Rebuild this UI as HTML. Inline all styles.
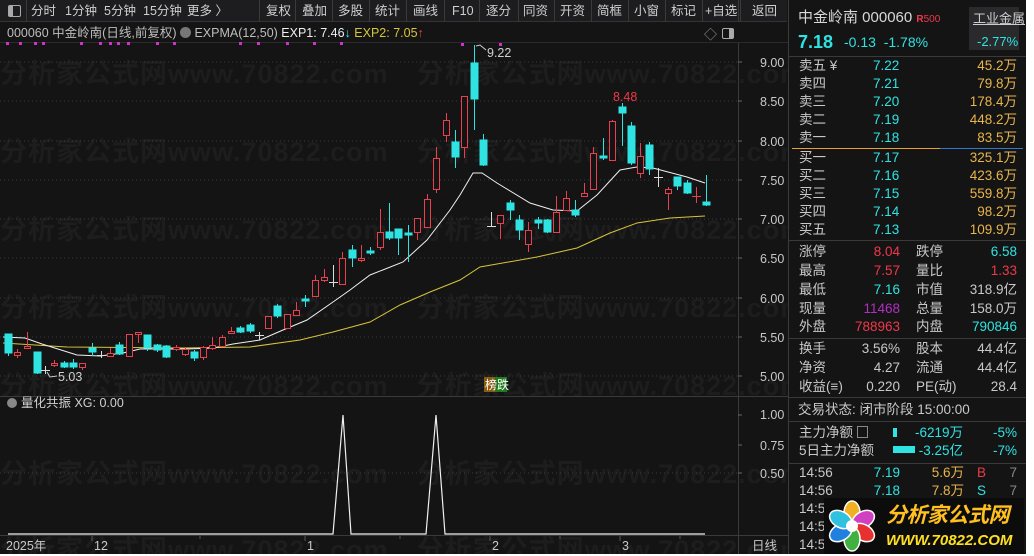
<!DOCTYPE html>
<html><head><meta charset="utf-8"><style>
*{margin:0;padding:0;box-sizing:border-box}
body{width:1034px;height:556px;background:#fff;overflow:hidden;position:relative;font-family:"Liberation Sans","Noto Sans CJK SC",sans-serif;font-size:13px;color:#c8c8c8}
#win{position:absolute;left:0;top:0;width:1026px;height:554px;background:#141414;overflow:hidden}
.a{position:absolute;white-space:nowrap}
.tb{position:absolute;left:0;top:0;width:787px;height:22px;background:#1d1d1f;border-bottom:1px solid #333}
.tb span{position:absolute;top:3px;font-size:12.5px;color:#cfcfcf;line-height:16px}
.dv{position:absolute;top:0;width:1px;height:22px;background:#3a3a3a}
.wm{position:absolute;left:0;font-size:27px;font-weight:bold;color:#1d1d1d;white-space:nowrap;letter-spacing:1px}
.rp{position:absolute;left:788px;top:0;width:238px;height:554px;border-left:1px solid #3a3a3a;background:#141414}
.r{position:absolute;font-size:13.5px;white-space:nowrap;line-height:18px;height:18px}
.hl{position:absolute;left:0;width:238px;height:1px;background:#3a3a3a}
.c{color:#2fe3e3}.y{color:#e8b44c}.rd{color:#f0384a}.g{color:#c8c8c8}.p{color:#b22fc2}
</style></head><body><div id="win">
<div class="wm" style="top:52px">分析家公式网www.70822.com　分析家公式网www.70822.com</div>
<div class="wm" style="top:130px">分析家公式网www.70822.com　分析家公式网www.70822.com</div>
<div class="wm" style="top:208px">分析家公式网www.70822.com　分析家公式网www.70822.com</div>
<div class="wm" style="top:286px">分析家公式网www.70822.com　分析家公式网www.70822.com</div>
<div class="wm" style="top:364px">分析家公式网www.70822.com　分析家公式网www.70822.com</div>
<div class="wm" style="top:452px">分析家公式网www.70822.com　分析家公式网www.70822.com</div>
<div class="wm" style="top:528px">分析家公式网www.70822.com　分析家公式网www.70822.com</div>

<div class="tb">
<div style="position:absolute;left:8px;top:5px;width:13px;height:12px;border:1px solid #aaa;border-radius:2px"><div style="width:4px;height:10px;background:#aaa"></div></div>
<div class="dv" style="left:26px"></div>
<span style="left:31px">分时</span><span style="left:65px">1分钟</span><span style="left:104px">5分钟</span><span style="left:143px">15分钟</span><span style="left:187px">更多 〉</span>
<div class="dv" style="left:259px"></div><span style="left:266px">复权</span>
<div class="dv" style="left:295px"></div><span style="left:302px">叠加</span>
<div class="dv" style="left:332px"></div><span style="left:338px">多股</span>
<div class="dv" style="left:369px"></div><span style="left:375px">统计</span>
<div class="dv" style="left:406px"></div><span style="left:413px">画线</span>
<div class="dv" style="left:444px"></div><span style="left:452px">F10</span>
<div class="dv" style="left:479px"></div><span style="left:486px">逐分</span>
<div class="dv" style="left:518px"></div><span style="left:523px">同资</span>
<div class="dv" style="left:554px"></div><span style="left:560px">开资</span>
<div class="dv" style="left:591px"></div><span style="left:597px">简框</span>
<div class="dv" style="left:628px"></div><span style="left:634px">小窗</span>
<div class="dv" style="left:665px"></div><span style="left:671px">标记</span>
<div class="dv" style="left:702px"></div><span style="left:705px">+自选</span>
<div class="dv" style="left:740px"></div><span style="left:752px">返回</span>
</div>

<div class="a" style="left:7px;top:25px;font-size:12.5px;color:#bdbdbd;line-height:17px">000060 中金岭南(日线,前复权) <span style="display:inline-block;width:11px;height:11px;border-radius:50%;background:#777;vertical-align:-1px"></span> EXPMA(12,50) <span style="color:#eee">EXP1: 7.46</span><span class="c">↓</span> <span style="color:#d8c43a">EXP2: 7.05</span><span class="rd">↑</span></div>
<div class="a" style="left:704px;top:24px;color:#999;font-size:13px">◇</div>
<div style="position:absolute;left:722px;top:28px;width:12px;height:11px;border:1px solid #aaa;border-radius:2px"><div style="margin-left:6px;width:4px;height:9px;background:#aaa"></div></div>

<svg width="790" height="556" style="position:absolute;left:0;top:0" xmlns="http://www.w3.org/2000/svg">
<g stroke="#3a3a3a" stroke-dasharray="1,3">
<line x1="0" y1="62" x2="738" y2="62"/><line x1="0" y1="101" x2="738" y2="101"/><line x1="0" y1="141" x2="738" y2="141"/><line x1="0" y1="180" x2="738" y2="180"/><line x1="0" y1="219" x2="738" y2="219"/><line x1="0" y1="258" x2="738" y2="258"/><line x1="0" y1="298" x2="738" y2="298"/><line x1="0" y1="337" x2="738" y2="337"/><line x1="0" y1="376" x2="738" y2="376"/><line x1="0" y1="473" x2="738" y2="473"/>
</g>
<line x1="738.5" y1="42" x2="738.5" y2="554" stroke="#3a3a3a"/>
<line x1="0" y1="396.5" x2="788" y2="396.5" stroke="#3a3a3a"/>
<line x1="0" y1="535.5" x2="788" y2="535.5" stroke="#3a3a3a"/>
<line x1="0" y1="42.5" x2="788" y2="42.5" stroke="#2a2a2a"/>
<g stroke="#666"><line x1="738" y1="62" x2="742" y2="62"/><line x1="738" y1="101" x2="742" y2="101"/><line x1="738" y1="141" x2="742" y2="141"/><line x1="738" y1="180" x2="742" y2="180"/><line x1="738" y1="219" x2="742" y2="219"/><line x1="738" y1="258" x2="742" y2="258"/><line x1="738" y1="298" x2="742" y2="298"/><line x1="738" y1="337" x2="742" y2="337"/><line x1="738" y1="376" x2="742" y2="376"/><line x1="738" y1="415" x2="742" y2="415"/><line x1="738" y1="445" x2="742" y2="445"/><line x1="738" y1="473" x2="742" y2="473"/></g>
<g font-size="12.5" fill="#c8c8c8" font-family="Liberation Sans">
<text x="760" y="67">9.00</text><text x="760" y="106">8.50</text><text x="760" y="146">8.00</text><text x="760" y="185">7.50</text><text x="760" y="224">7.00</text><text x="760" y="263">6.50</text><text x="760" y="303">6.00</text><text x="760" y="342">5.50</text><text x="760" y="381">5.00</text>
<text x="760" y="419">1.00</text><text x="760" y="450">0.75</text><text x="760" y="478">0.50</text>
</g>
<g fill="#d030d0"><rect x="6" y="42" width="3" height="3"/><rect x="19" y="42" width="3" height="3"/><rect x="34" y="42" width="3" height="3"/><rect x="42" y="42" width="3" height="3"/><rect x="80" y="42" width="3" height="3"/><rect x="99" y="42" width="3" height="3"/><rect x="109" y="42" width="3" height="3"/><rect x="117" y="42" width="3" height="3"/><rect x="127" y="42" width="3" height="3"/><rect x="156" y="42" width="3" height="3"/><rect x="173" y="42" width="3" height="3"/><rect x="239" y="42" width="3" height="3"/><rect x="257" y="42" width="3" height="3"/><rect x="286" y="42" width="3" height="3"/><rect x="313" y="42" width="3" height="3"/><rect x="340" y="42" width="3" height="3"/><rect x="461" y="43" width="3" height="3"/><rect x="499" y="43" width="3" height="3"/></g>
<polyline fill="none" stroke="#d8c43a" stroke-width="1" points="3,343 67,347 183,348 250,347 300,340 333,332 370,322 400,305 430,292 460,280 480,267 537,257 577,248 610,233 637,223 670,218 705,216"/>
<polyline fill="none" stroke="#f0f0f0" stroke-width="1" points="3,337 25,338 42,344 77,355 100,356 123,353 140,349 187,349 213,348 233,344 260,340 283,330 307,320 333,302 350,290 370,275 403,262 427,240 450,210 460,195 473,173 482,173 497,183 530,203 553,210 577,211 597,195 620,170 637,167 653,168 687,177 705,183"/>
<g stroke-width="1">
<g stroke="#2fe3e3" fill="#2fe3e3">
<line x1="8.5" y1="334" x2="8.5" y2="356"/><rect x="5" y="334" width="7" height="19"/>
<line x1="37.5" y1="352" x2="37.5" y2="374"/><rect x="34" y="352" width="7" height="21"/>
<line x1="64.5" y1="361" x2="64.5" y2="368"/><rect x="61" y="363" width="7" height="4"/>
<line x1="73.5" y1="359" x2="73.5" y2="369"/><rect x="70" y="363" width="7" height="4"/>
<line x1="92.5" y1="343" x2="92.5" y2="356"/><rect x="89" y="348" width="7" height="4"/>
<line x1="119.5" y1="342" x2="119.5" y2="355"/><rect x="116" y="345" width="7" height="9"/>
<line x1="147.5" y1="335" x2="147.5" y2="351"/><rect x="144" y="335" width="7" height="13"/>
<line x1="157.5" y1="344" x2="157.5" y2="352"/><rect x="154" y="345" width="7" height="5"/>
<line x1="166.5" y1="345" x2="166.5" y2="358"/><rect x="163" y="346" width="7" height="11"/>
<line x1="194.5" y1="350" x2="194.5" y2="361"/><rect x="191" y="352" width="7" height="6"/>
<line x1="240.5" y1="326" x2="240.5" y2="333"/><rect x="237" y="328" width="7" height="4"/>
<line x1="250.5" y1="323" x2="250.5" y2="333"/><rect x="247" y="325" width="7" height="6"/>
<line x1="277.5" y1="304" x2="277.5" y2="318"/><rect x="274" y="306" width="7" height="10"/>
<line x1="305.5" y1="295" x2="305.5" y2="307"/><rect x="302" y="299" width="7" height="2"/>
<line x1="352.5" y1="245" x2="352.5" y2="267"/><rect x="349" y="250" width="7" height="8"/>
<line x1="370.5" y1="247" x2="370.5" y2="255"/><rect x="367" y="251" width="7" height="2"/>
<line x1="389.5" y1="203" x2="389.5" y2="240"/><rect x="386" y="232" width="7" height="6"/>
<line x1="398.5" y1="229" x2="398.5" y2="255"/><rect x="395" y="229" width="7" height="9"/>
<line x1="408.5" y1="225" x2="408.5" y2="262"/><rect x="405" y="233" width="7" height="2"/>
<line x1="455.5" y1="130" x2="455.5" y2="168"/><rect x="452" y="142" width="7" height="15"/>
<line x1="474.5" y1="45" x2="474.5" y2="130"/><rect x="471" y="63" width="7" height="36"/>
<line x1="483.5" y1="134" x2="483.5" y2="166"/><rect x="480" y="140" width="7" height="25"/>
<line x1="510.5" y1="200" x2="510.5" y2="220"/><rect x="507" y="203" width="7" height="7"/>
<line x1="519.5" y1="215" x2="519.5" y2="240"/><rect x="516" y="220" width="7" height="10"/>
<line x1="538.5" y1="217" x2="538.5" y2="229"/><rect x="535" y="220" width="7" height="3"/>
<line x1="547.5" y1="219" x2="547.5" y2="233"/><rect x="544" y="220" width="7" height="12"/>
<line x1="575.5" y1="200" x2="575.5" y2="217"/><rect x="572" y="210" width="7" height="5"/>
<line x1="603.5" y1="138" x2="603.5" y2="160"/><rect x="600" y="156" width="7" height="2"/>
<line x1="622.5" y1="103" x2="622.5" y2="146"/><rect x="619" y="107" width="7" height="6"/>
<line x1="631.5" y1="122" x2="631.5" y2="165"/><rect x="628" y="126" width="7" height="37"/>
<line x1="649.5" y1="142" x2="649.5" y2="175"/><rect x="646" y="145" width="7" height="24"/>
<line x1="677.5" y1="177" x2="677.5" y2="190"/><rect x="674" y="177" width="7" height="9"/>
<line x1="687.5" y1="180" x2="687.5" y2="194"/><rect x="684" y="183" width="7" height="10"/>
<line x1="706.5" y1="175" x2="706.5" y2="206"/><rect x="703" y="202" width="7" height="3"/>
</g>
<g stroke="#e8404e" fill="#141414">
<line x1="17.5" y1="349" x2="17.5" y2="358"/><rect x="14.5" y="352.5" width="6" height="3"/>
<line x1="27.5" y1="332" x2="27.5" y2="349"/><rect x="24.5" y="346.5" width="6" height="2"/>
<line x1="54.5" y1="360" x2="54.5" y2="367"/><rect x="51.5" y="363.5" width="6" height="2"/>
<line x1="82.5" y1="363" x2="82.5" y2="370"/><rect x="79.5" y="363.5" width="6" height="4"/>
<line x1="110.5" y1="348" x2="110.5" y2="357"/><rect x="107.5" y="353.5" width="6" height="3"/>
<rect x="126.5" y="334.5" width="6" height="22"/>
<line x1="138.5" y1="332" x2="138.5" y2="343"/><rect x="135.5" y="332.5" width="6" height="2"/>
<line x1="176.5" y1="345" x2="176.5" y2="351"/><rect x="173.5" y="347.5" width="6" height="2"/>
<line x1="185.5" y1="347" x2="185.5" y2="356"/><rect x="182.5" y="349.5" width="6" height="5"/>
<line x1="203.5" y1="346" x2="203.5" y2="360"/><rect x="200.5" y="347.5" width="6" height="10"/>
<line x1="212.5" y1="337" x2="212.5" y2="350"/><rect x="209.5" y="345.5" width="6" height="3"/>
<line x1="222.5" y1="335" x2="222.5" y2="347"/><rect x="219.5" y="337.5" width="6" height="9"/>
<line x1="231.5" y1="327" x2="231.5" y2="334"/><rect x="228.5" y="331.5" width="6" height="2"/>
<rect x="265.5" y="316.5" width="6" height="12"/>
<rect x="284.5" y="314.5" width="6" height="14"/>
<line x1="296.5" y1="302" x2="296.5" y2="316"/><rect x="293.5" y="310.5" width="6" height="5"/>
<line x1="315.5" y1="275" x2="315.5" y2="297"/><rect x="312.5" y="280.5" width="6" height="16"/>
<line x1="324.5" y1="269" x2="324.5" y2="282"/><rect x="321.5" y="277.5" width="6" height="3"/>
<line x1="342.5" y1="252" x2="342.5" y2="285"/><rect x="339.5" y="258.5" width="6" height="26"/>
<line x1="361.5" y1="245" x2="361.5" y2="262"/><rect x="358.5" y="258.5" width="6" height="2"/>
<line x1="380.5" y1="209" x2="380.5" y2="250"/><rect x="377.5" y="232.5" width="6" height="15"/>
<line x1="417.5" y1="218" x2="417.5" y2="240"/><rect x="414.5" y="218.5" width="6" height="14"/>
<line x1="427.5" y1="194" x2="427.5" y2="228"/><rect x="424.5" y="199.5" width="6" height="28"/>
<line x1="436.5" y1="147" x2="436.5" y2="193"/><rect x="433.5" y="158.5" width="6" height="31"/>
<line x1="446.5" y1="113" x2="446.5" y2="142"/><rect x="443.5" y="120.5" width="6" height="15"/>
<line x1="464.5" y1="96" x2="464.5" y2="158"/><rect x="461.5" y="96.5" width="6" height="51"/>
<line x1="500.5" y1="215" x2="500.5" y2="239"/><rect x="497.5" y="215.5" width="6" height="8"/>
<line x1="528.5" y1="222" x2="528.5" y2="252"/><rect x="525.5" y="230.5" width="6" height="14"/>
<line x1="556.5" y1="196" x2="556.5" y2="233"/><rect x="553.5" y="212.5" width="6" height="20"/>
<line x1="566.5" y1="191" x2="566.5" y2="210"/><rect x="563.5" y="198.5" width="6" height="12"/>
<line x1="584.5" y1="183" x2="584.5" y2="197"/><rect x="581.5" y="193.5" width="6" height="3"/>
<line x1="593.5" y1="147" x2="593.5" y2="190"/><rect x="590.5" y="153.5" width="6" height="36"/>
<line x1="612.5" y1="120" x2="612.5" y2="161"/><rect x="609.5" y="121.5" width="6" height="39"/>
<line x1="640.5" y1="143" x2="640.5" y2="178"/><rect x="637.5" y="156.5" width="6" height="17"/>
<line x1="668.5" y1="187" x2="668.5" y2="210"/><rect x="665.5" y="189.5" width="6" height="4"/>
<line x1="696.5" y1="187" x2="696.5" y2="203"/><line x1="692" y1="196.5" x2="701" y2="196.5"/>
</g>
<g stroke="#dddddd">
<line x1="45.5" y1="366" x2="45.5" y2="374"/><line x1="41" y1="370.5" x2="50" y2="370.5"/>
<line x1="101.5" y1="351" x2="101.5" y2="358"/><line x1="97" y1="355.5" x2="106" y2="355.5"/>
<line x1="259.5" y1="332" x2="259.5" y2="340"/><line x1="255" y1="335.5" x2="264" y2="335.5"/>
<line x1="333.5" y1="265" x2="333.5" y2="287"/><line x1="329" y1="282.5" x2="338" y2="282.5"/>
<line x1="491.5" y1="212" x2="491.5" y2="227"/><line x1="487" y1="226.5" x2="496" y2="226.5"/>
<line x1="658.5" y1="168" x2="658.5" y2="187"/><line x1="654" y1="177.5" x2="663" y2="177.5"/>
</g>
</g>
<g font-family="Liberation Sans" font-size="12.5">
<polyline points="476,46 480,45 486,50" fill="none" stroke="#ccc"/><text x="487" y="57" fill="#d0d0d0">9.22</text>
<text x="613" y="101" fill="#f0384a">8.48</text>
<polyline points="47,372 50,377 57,376" fill="none" stroke="#ccc"/><text x="58" y="381" fill="#d0d0d0">5.03</text>
</g>
<rect x="484" y="377" width="11" height="15" fill="#8a5a10"/><rect x="495" y="377" width="12" height="15" fill="#1f7a1f"/>
<text x="485" y="389" font-size="12" fill="#fff" font-family="Noto Sans CJK SC">榜跌</text>
<circle cx="12" cy="403" r="5" fill="#888"/>
<text x="21" y="407" font-size="12.5" fill="#d0d0d0" font-family="Liberation Sans, Noto Sans CJK SC">量化共振 XG: 0.00</text>
<polyline fill="none" stroke="#f0f0f0" stroke-width="1.2" points="8,534 333,534 343,415 351,534 426,534 436,415 445,534 705,534"/>
<g stroke="#555"><line x1="92" y1="536" x2="92" y2="541"/><line x1="305" y1="536" x2="305" y2="541"/><line x1="490" y1="536" x2="490" y2="541"/><line x1="620" y1="536" x2="620" y2="541"/><line x1="200" y1="536" x2="200" y2="539"/><line x1="400" y1="536" x2="400" y2="539"/><line x1="560" y1="536" x2="560" y2="539"/><line x1="680" y1="536" x2="680" y2="539"/></g>
<g font-size="12.5" fill="#c8c8c8" font-family="Liberation Sans, Noto Sans CJK SC">
<text x="6" y="550">2025年</text><text x="94" y="550">12</text><text x="307" y="550">1</text><text x="492" y="550">2</text><text x="622" y="550">3</text><text x="752" y="550">日线</text>
</g>
<line x1="738.5" y1="0" x2="738.5" y2="22" stroke="#3a3a3a"/>
</svg>

<div class="rp">
<div class="r" style="left:9px;top:8px;font-size:15px;color:#d8d8d8;line-height:20px;height:20px">中金岭南 000060 <span style="color:#f0384a;font-size:10px;font-weight:bold">R</span><span style="color:#f0384a;font-size:10px">500</span></div>
<div style="position:absolute;left:180px;top:7px;width:50px;height:43px;background:#2a2a2c"></div>
<div class="r" style="left:184px;top:10px;font-size:13px;color:#ccc;text-decoration:underline">工业金属</div>
<div class="r c" style="left:188px;top:33px;font-size:13px">-2.77%</div>
<div class="r c" style="left:9px;top:31px;font-size:18px;font-weight:bold;line-height:22px;height:22px">7.18</div>
<div class="r c" style="left:55px;top:33px;font-size:14px">-0.13&nbsp; -1.78%</div>
<div class="hl" style="top:56px"></div>
<div class="r g" style="left:10px;top:57px">卖五 ¥</div><div class="r c" style="left:84px;top:57px">7.22</div><div class="r y" style="right:9px;top:57px">45.2万</div>
<div class="r g" style="left:10px;top:75px">卖四</div><div class="r c" style="left:84px;top:75px">7.21</div><div class="r y" style="right:9px;top:75px">79.8万</div>
<div class="r g" style="left:10px;top:93px">卖三</div><div class="r c" style="left:84px;top:93px">7.20</div><div class="r y" style="right:9px;top:93px">178.4万</div>
<div class="r g" style="left:10px;top:111px">卖二</div><div class="r c" style="left:84px;top:111px">7.19</div><div class="r y" style="right:9px;top:111px">448.2万</div>
<div class="r g" style="left:10px;top:129px">卖一</div><div class="r c" style="left:84px;top:129px">7.18</div><div class="r y" style="right:9px;top:129px">83.5万</div>
<div style="position:absolute;left:3px;top:148px;width:148px;height:1px;background:#e8a030"></div><div style="position:absolute;left:151px;top:148px;width:83px;height:1px;background:#2f7ad0"></div>
<div class="r g" style="left:10px;top:149px">买一</div><div class="r c" style="left:84px;top:149px">7.17</div><div class="r y" style="right:9px;top:149px">325.1万</div>
<div class="r g" style="left:10px;top:167px">买二</div><div class="r c" style="left:84px;top:167px">7.16</div><div class="r y" style="right:9px;top:167px">423.6万</div>
<div class="r g" style="left:10px;top:185px">买三</div><div class="r c" style="left:84px;top:185px">7.15</div><div class="r y" style="right:9px;top:185px">559.8万</div>
<div class="r g" style="left:10px;top:203px">买四</div><div class="r c" style="left:84px;top:203px">7.14</div><div class="r y" style="right:9px;top:203px">98.2万</div>
<div class="r g" style="left:10px;top:221px">买五</div><div class="r c" style="left:84px;top:221px">7.13</div><div class="r y" style="right:9px;top:221px">109.9万</div>
<div class="hl" style="top:240px"></div>
<div class="r g" style="left:10px;top:243px">涨停</div><div class="r rd" style="right:126px;top:243px">8.04</div><div class="r g" style="left:127px;top:243px">跌停</div><div class="r c" style="right:9px;top:243px">6.58</div>
<div class="r g" style="left:10px;top:262px">最高</div><div class="r rd" style="right:126px;top:262px">7.57</div><div class="r g" style="left:127px;top:262px">量比</div><div class="r rd" style="right:9px;top:262px">1.33</div>
<div class="r g" style="left:10px;top:281px">最低</div><div class="r c" style="right:126px;top:281px">7.16</div><div class="r g" style="left:127px;top:281px">市值</div><div class="r g" style="right:9px;top:281px">318.9亿</div>
<div class="r g" style="left:10px;top:300px">现量</div><div class="r p" style="right:126px;top:300px">11468</div><div class="r g" style="left:127px;top:300px">总量</div><div class="r g" style="right:9px;top:300px">158.0万</div>
<div class="r g" style="left:10px;top:318px">外盘</div><div class="r rd" style="right:126px;top:318px">788963</div><div class="r g" style="left:127px;top:318px">内盘</div><div class="r c" style="right:9px;top:318px">790846</div>
<div class="hl" style="top:338px"></div>
<div class="r g" style="left:10px;top:340px">换手</div><div class="r g" style="right:126px;top:340px">3.56%</div><div class="r g" style="left:127px;top:340px">股本</div><div class="r g" style="right:9px;top:340px">44.4亿</div>
<div class="r g" style="left:10px;top:359px">净资</div><div class="r g" style="right:126px;top:359px">4.27</div><div class="r g" style="left:127px;top:359px">流通</div><div class="r g" style="right:9px;top:359px">44.4亿</div>
<div class="r g" style="left:10px;top:378px">收益(≡)</div><div class="r g" style="right:126px;top:378px">0.220</div><div class="r g" style="left:127px;top:378px">PE(动)</div><div class="r g" style="right:9px;top:378px">28.4</div>
<div class="hl" style="top:397px"></div>
<div class="r g" style="left:9px;top:401px">交易状态: 闭市阶段 15:00:00</div>
<div class="hl" style="top:421px"></div>
<div class="r g" style="left:10px;top:424px">主力净额 <span style="display:inline-block;width:11px;height:12px;border:1px solid #888;vertical-align:-1px"></span></div>
<div style="position:absolute;left:104px;top:428px;width:4px;height:9px;background:#2fe3e3"></div>
<div class="r c" style="right:63px;top:424px">-6219万</div><div class="r c" style="right:9px;top:424px">-5%</div>
<div class="r g" style="left:10px;top:442px">5日主力净额</div>
<div style="position:absolute;left:104px;top:446px;width:22px;height:7px;background:#2fe3e3"></div>
<div class="r c" style="right:63px;top:442px">-3.25亿</div><div class="r c" style="right:9px;top:442px">-7%</div>
<div class="hl" style="top:463px"></div>
<div class="r g" style="left:10px;top:464px">14:56</div><div class="r c" style="right:126px;top:464px">7.19</div><div class="r y" style="right:62px;top:464px">5.6万</div><div class="r rd" style="left:188px;top:464px">B</div><div class="r" style="right:9px;top:464px;color:#888">7</div>
<div class="r g" style="left:10px;top:482px">14:56</div><div class="r c" style="right:126px;top:482px">7.18</div><div class="r y" style="right:62px;top:482px">7.8万</div><div class="r c" style="left:188px;top:482px">S</div><div class="r" style="right:9px;top:482px;color:#888">7</div>
<div class="r g" style="left:10px;top:500px">14:5</div>
<div class="r g" style="left:10px;top:518px">14:5</div>
<div class="r g" style="left:10px;top:536px">14:5</div>
<div style="position:absolute;left:35px;top:498px;width:200px;height:56px;background:#0c0c0c"></div>
<svg width="50" height="54" style="position:absolute;left:38px;top:499px">
<g transform="translate(25,27)">
<ellipse rx="8" ry="12" cy="-13" fill="#f0b020" stroke="#fff" stroke-width="1.5"/>
<ellipse rx="8" ry="12" cy="-13" transform="rotate(60)" fill="#d040c0" stroke="#fff" stroke-width="1.5"/>
<ellipse rx="8" ry="12" cy="-13" transform="rotate(120)" fill="#e83030" stroke="#fff" stroke-width="1.5"/>
<ellipse rx="8" ry="12" cy="-13" transform="rotate(180)" fill="#40b040" stroke="#fff" stroke-width="1.5"/>
<ellipse rx="8" ry="12" cy="-13" transform="rotate(240)" fill="#2080e0" stroke="#fff" stroke-width="1.5"/>
<ellipse rx="8" ry="12" cy="-13" transform="rotate(300)" fill="#30c0e0" stroke="#fff" stroke-width="1.5"/>
<circle r="6" fill="#fff"/>
</g></svg>
<div class="r" style="left:97px;top:503px;font-size:21px;line-height:26px;height:26px;font-weight:bold;font-style:italic;color:#ffc020;letter-spacing:-0.5px">分析家公式网</div>
<div class="r" style="left:97px;top:532px;font-size:15px;font-weight:bold;font-style:italic;color:#ffe020">WWW.70822.COM</div>
</div>
</div></body></html>
